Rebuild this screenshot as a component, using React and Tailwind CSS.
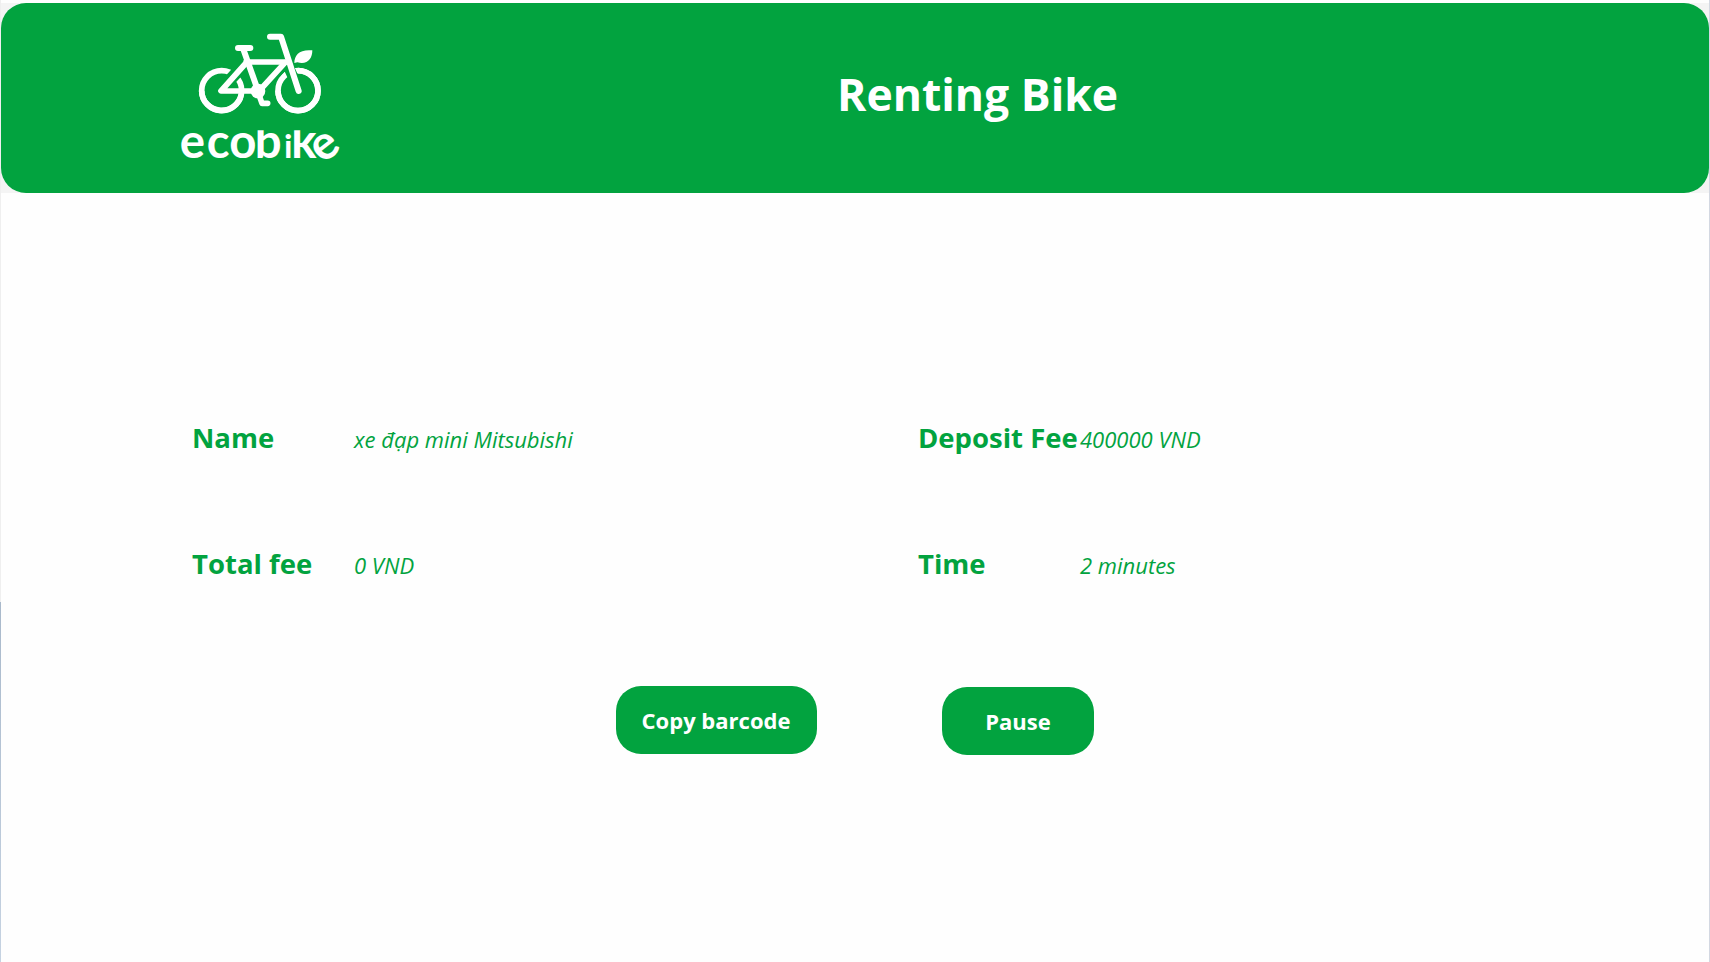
function Logo() {
  return (
    <svg className="h-[150px] w-[180px] shrink-0" viewBox="0 0 540 450" role="img" aria-label="ecobike">
      <defs>
        <clipPath id="ascenders">
          <rect x="0" y="331" width="540" height="90" />
        </clipPath>
      </defs>
      <g fill="none" stroke="#fff" strokeLinecap="round" strokeLinejoin="round">
        <circle cx="155" cy="212" r="60" strokeWidth="17" />
        <circle cx="384" cy="212" r="60" strokeWidth="17" />
        <path d="M228 128 L146 216" stroke="#02a33f" strokeWidth="36" strokeLinecap="butt" />
        <path d="M347 128 L268 212 M346 120 L388 212" stroke="#02a33f" strokeWidth="32" strokeLinecap="butt" />
        <path d="M95 212 A60 60 0 0 0 214 222 M324 212 A60 60 0 1 0 384 152" strokeWidth="17" strokeLinecap="butt" />
        <path d="M204 84 H241 M220 88 L262 206" strokeWidth="18" />
        <path d="M228 126 H345 M228 129 L153 213 H262" strokeWidth="17" />
        <path d="M345 128 L270 210" strokeWidth="17" />
        <path d="M300 50 H333 L386 213" strokeWidth="18" />
        <path d="M264 216 L276 250 H293" strokeWidth="17" />
      </g>
      <circle cx="264" cy="213" r="22" fill="#fff" />
      <path d="M373 129 C373 104 390 87 427 91 C427 117 412 135 382 127 Z" fill="#fff" />
      <g clipPath="url(#ascenders)">
        <text
          y="415"
          fill="#fff"
          className="font-['Lato',sans-serif] text-[142px] font-bold"
        >
          <tspan x="29">e</tspan>
          <tspan x="110">c</tspan>
          <tspan x="178">o</tspan>
          <tspan x="254">b</tspan>
          <tspan x="342" className="text-[100px]">i</tspan>
          <tspan x="364">k</tspan>
        </text>
        <text
          y="415"
          x="428"
          fill="#fff"
          transform="rotate(-38 469 380)"
          className="font-['Lato',sans-serif] text-[142px] font-bold"
        >
          e
        </text>
      </g>
    </svg>
  );
}

function Field({ label, value, labelClass, valueClass }) {
  return (
    <div className="flex items-baseline">
      <span className={`w-[162px] shrink-0 whitespace-nowrap text-[27.5px] leading-10 font-bold ${labelClass}`}>
        {label}
      </span>
      <span className={`whitespace-nowrap text-[22px] leading-10 italic ${valueClass}`}>{value}</span>
    </div>
  );
}

export default function App() {
  return (
    <div className="flex h-[962px] w-[1710px] overflow-hidden bg-[#fefefe] font-['Open_Sans','Noto_Sans',sans-serif] text-[#02a33f]">
      <div className="flex w-px shrink-0 flex-col bg-[#efefef]">
        <div className="mt-[602px] flex-1 bg-linear-to-b from-[#a9b9cb] to-[#c6d3e2]" />
      </div>
      <div className="flex min-w-0 flex-1 flex-col">
        <div className="mt-[3px] h-[190px] shrink-0 bg-[#f4f4f4]">
          <header className="flex h-full rounded-[25px] bg-[#02a33f] pt-[17px] pl-[169px] text-white">
            <Logo />
            <h1 className="mt-[44px] ml-[487px] text-[44.5px] leading-[60px] font-bold whitespace-nowrap">
              Renting Bike
            </h1>
          </header>
        </div>
        <main className="flex flex-1 flex-col">
          <div className="mt-[225px] ml-[191px] grid grid-cols-[726px_1fr] gap-y-[85px]">
            <Field label="Name" value="xe đạp mini Mitsubishi" labelClass="" valueClass="" />
            <Field label="Deposit Fee" value="400000 VND" labelClass="" valueClass="" />
            <Field label="Total fee" value="0 VND" labelClass="" valueClass="" />
            <Field label="Time" value="2 minutes" labelClass="" valueClass="" />
          </div>
          <div className="mt-[101px] ml-[614.5px] flex gap-[125.5px] text-[22px] font-bold text-white">
            <button className="h-[68px] w-[201px] rounded-[25px] bg-[#02a33f] whitespace-nowrap">
              Copy barcode
            </button>
            <button className="mt-px h-[68px] w-[152px] rounded-[25px] bg-[#02a33f] whitespace-nowrap">
              Pause
            </button>
          </div>
        </main>
      </div>
      <div className="w-px shrink-0 bg-[#d3d8e2]" />
    </div>
  );
}
